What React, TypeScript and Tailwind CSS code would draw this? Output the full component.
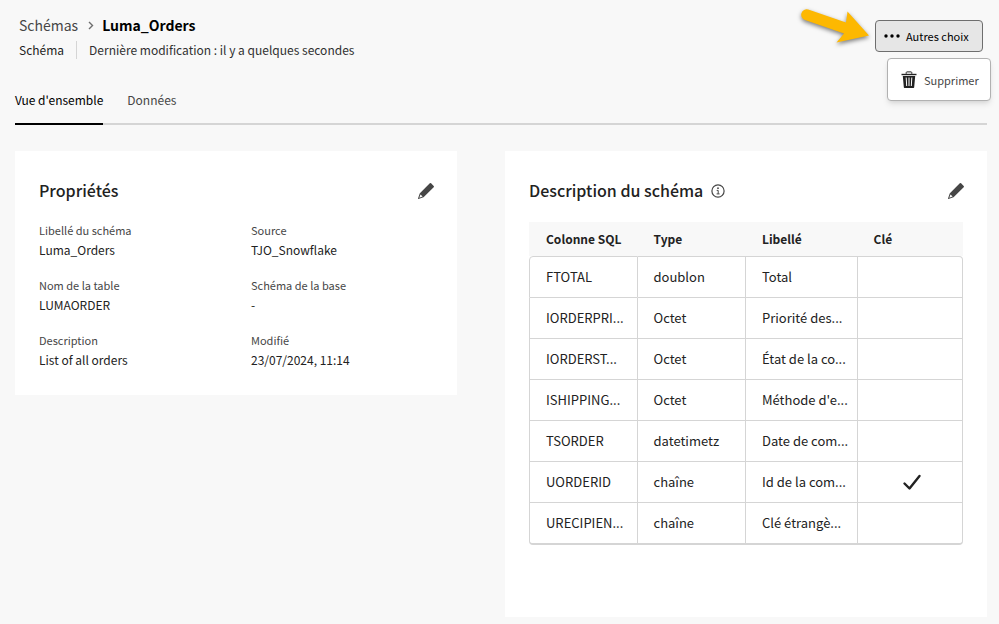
import type { ReactNode } from "react";

const properties: [string, string][] = [
  ["Libellé du schéma", "Luma_Orders"],
  ["Source", "TJO_Snowflake"],
  ["Nom de la table", "LUMAORDER"],
  ["Schéma de la base", "-"],
  ["Description", "List of all orders"],
  ["Modifié", "23/07/2024, 11:14"],
];

const columns: { name: string; type: string; label: string; key?: boolean }[] = [
  { name: "FTOTAL", type: "doublon", label: "Total" },
  { name: "IORDERPRI...", type: "Octet", label: "Priorité des..." },
  { name: "IORDERST...", type: "Octet", label: "État de la co..." },
  { name: "ISHIPPING...", type: "Octet", label: "Méthode d'e..." },
  { name: "TSORDER", type: "datetimetz", label: "Date de com..." },
  { name: "UORDERID", type: "chaîne", label: "Id de la com...", key: true },
  { name: "URECIPIEN...", type: "chaîne", label: "Clé étrangè..." },
];

function PencilIcon() {
  return (
    <svg width="18" height="18" viewBox="0 0 18 18" fill="#464646" aria-hidden="true">
      <path d="M16.700 3.900 14.100 1.300a.9.9 0 0 0-1.300 0L2.900 11.200a.8.8 0 0 0-.2.300L1 16.600c-.1.300.2.500.4.400l5.100-1.700.3-.2 9.900-9.900a.9.9 0 0 0 0-1.300zM2.300 15.700l1.200-3.300 2.100 2.100z" />
    </svg>
  );
}

function TrashIcon() {
  return (
    <svg width="16" height="18" viewBox="0 0 16 18" aria-hidden="true">
      <path d="M5.200 2.800V1.600c0-.4.3-.7.7-.7h4.200c.4 0 .7.3.7.7v1.200" fill="none" stroke="#222" strokeWidth="1" />
      <path d="M.5 2.800h15v1.400H.5z" fill="#222" />
      <path d="M1.800 5h12.400l-1 11c0 .6-.4 1-1 1H3.800c-.6 0-1-.4-1-1z" fill="#222" />
      <path d="M5.200 6.500l.5 8.500M8 6.500v8.500M10.800 6.500l-.5 8.500" stroke="#fff" strokeWidth="1" />
    </svg>
  );
}

function ArrowMarker() {
  return (
    <svg
      className="pointer-events-none absolute top-[-16px] right-[109px] drop-shadow-[0_2px_2px_rgba(0,0,0,0.5)]"
      width="76"
      height="46"
      viewBox="0 0 76 46"
      aria-hidden="true"
    >
      <path d="M10.200 5.600 48 18.500 49.500 7.500 71 31.500 38.500 38.500 46 29.500 7 15.900A5.300 5.300 0 0 1 10.200 5.600Z" fill="#fdb801" />
    </svg>
  );
}

function Card({ title, info, children }: { title: string; info?: boolean; children: ReactNode }) {
  return (
    <section className="bg-white px-6 pt-7">
      <div className="flex h-6 items-center">
        <h2 className="pb-0.5 text-base font-medium text-[#222]">{title}</h2>
        {info && (
          <button type="button" aria-label="Informations" className="ml-2">
            <svg width="14" height="14" viewBox="0 0 14 14" aria-hidden="true">
              <circle cx="7" cy="7" r="6.100" fill="none" stroke="#464646" strokeWidth="1.200" />
              <circle cx="7" cy="4.200" r=".9" fill="#464646" />
              <path d="M5.700 6.400H7.200V9.800M5.600 9.900H8.600" fill="none" stroke="#464646" strokeWidth="1" />
            </svg>
          </button>
        )}
        <button type="button" aria-label={`Modifier ${title}`} className="-mr-0.5 ml-auto">
          <PencilIcon />
        </button>
      </div>
      {children}
    </section>
  );
}

export default function App() {
  return (
    <main className="min-h-screen bg-[#f8f8f8] pr-3 pb-2 pl-[15px] font-['Noto_Sans_CJK_SC','Noto_Sans',sans-serif] text-[13px] leading-5 text-[#222]">
      <header className="flex justify-between pt-3.5 pl-1">
        <div>
          <nav aria-label="Fil d'Ariane" className="flex h-[22px] items-center text-sm">
            <a href="#schemas" className="text-[#464646]">Schémas</a>
            <svg className="mr-2 ml-2.5" width="6" height="9" viewBox="0 0 6 9" fill="none" aria-hidden="true">
              <path d="m1 1 3.500 3.500L1 8" stroke="#6e6e6e" strokeWidth="1.400" />
            </svg>
            <h1 className="font-bold text-black">Luma_Orders</h1>
          </nav>
          <div className="mt-1 flex h-5 items-center text-xs">
            <span>Schéma</span>
            <span className="mx-3 h-[18px] w-px bg-[#d5d5d5]" />
            <span className="text-[#303030]">Dernière modification : il y a quelques secondes</span>
          </div>
        </div>
        <div className="relative mt-1.5 mr-1">
          <ArrowMarker />
          <button
            type="button"
            aria-haspopup="menu"
            aria-expanded="true"
            className="flex h-8 w-[108px] items-center gap-1.5 rounded border border-[#6e6e6e] bg-[#e6e6e6] pl-2 text-[11px] text-black"
          >
            <svg width="16" height="4" viewBox="0 0 16 4" fill="#000" aria-hidden="true">
              <circle cx="2" cy="2" r="1.700" />
              <circle cx="8" cy="2" r="1.700" />
              <circle cx="14" cy="2" r="1.700" />
            </svg>
            Autres choix
          </button>
          <div
            role="menu"
            className="absolute top-[38px] right-[-8px] w-[104px] rounded border border-[#b1b1b1] bg-white shadow-md"
          >
            <button
              type="button"
              role="menuitem"
              className="flex h-[41px] w-full items-center gap-[7px] pl-[13px] text-[11px] text-[#464646]"
            >
              <TrashIcon />
              Supprimer
            </button>
          </div>
        </div>
      </header>

      <div role="tablist" className="mt-[30px] flex h-[35px] gap-6 border-b-2 border-[#d5d5d5] text-xs leading-5">
        <button type="button" role="tab" aria-selected="true" className="-mb-0.5 flex items-start border-b-2 border-black text-black">
          Vue d'ensemble
        </button>
        <button type="button" role="tab" aria-selected="false" className="flex items-start text-[#464646]">
          Données
        </button>
      </div>

      <div className="mt-[26px] grid grid-cols-[442fr_482fr] items-start gap-12">
        <Card title="Propriétés">
          <dl className="mt-[18px] grid grid-cols-[212px_1fr] gap-y-4 pb-[25px]">
            {properties.map(([term, value]) => (
              <div key={term}>
                <dt className="text-[11px] leading-[18px] text-[#464646]">{term}</dt>
                <dd className="text-xs leading-[21px]">{value}</dd>
              </div>
            ))}
          </dl>
        </Card>

        <Card title="Description du schéma" info>
          <table className="mt-[19px] mb-[72px] w-full table-fixed border-separate border-spacing-0 text-left">
            <colgroup>
              <col className="w-[25%]" />
              <col className="w-[25%]" />
              <col className="w-[25.7%]" />
              <col className="w-[24.3%]" />
            </colgroup>
            <thead className="bg-[#f8f8f8] text-xs">
              <tr className="h-[34px]">
                {["Colonne SQL", "Type", "Libellé", "Clé"].map((heading) => (
                  <th key={heading} scope="col" className="pl-4 font-bold first:pl-[17px]">
                    {heading}
                  </th>
                ))}
              </tr>
            </thead>
            <tbody className="[&>tr:first-child>td]:border-t [&>tr:first-child>td:first-child]:rounded-tl [&>tr:first-child>td:last-child]:rounded-tr [&>tr:last-child>td]:border-b-2 [&>tr:last-child>td:first-child]:rounded-bl [&>tr:last-child>td:last-child]:rounded-br">
              {columns.map((column) => (
                <tr
                  key={column.name}
                  className="h-[41px] first:h-[42px] last:h-[42px] [&>td]:border-r [&>td]:border-b [&>td]:border-[#d5d5d5] [&>td]:pl-4 [&>td:first-child]:border-l [&>td:last-child]:pl-1"
                >
                  <td className="whitespace-nowrap">{column.name}</td>
                  <td className="whitespace-nowrap">{column.type}</td>
                  <td className="whitespace-nowrap">{column.label}</td>
                  <td>
                    {column.key && (
                      <svg className="mx-auto" width="20" height="18" viewBox="0 0 20 18" fill="none" role="img" aria-label="Clé">
                        <path d="m2.500 10.500 5 5L17.500 3" stroke="#222" strokeWidth="2.400" strokeLinecap="round" strokeLinejoin="round" />
                      </svg>
                    )}
                  </td>
                </tr>
              ))}
            </tbody>
          </table>
        </Card>
      </div>
    </main>
  );
}
